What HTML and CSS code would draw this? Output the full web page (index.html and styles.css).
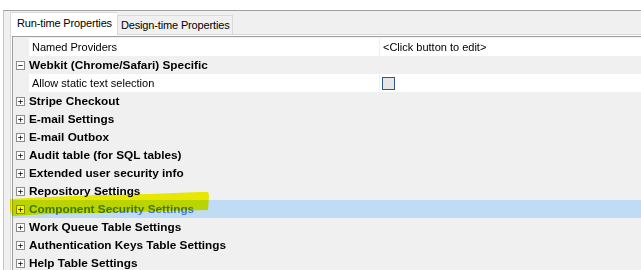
FILE: index.html
```html
<!DOCTYPE html>
<html lang="en">
<head>
  <meta charset="UTF-8">
  <meta name="viewport" content="width=device-width, initial-scale=1.0">
  <link rel="stylesheet" href="styles.css">
  <title>Properties</title>
</head>
<body>

<div id="window">
  <div class="tabs">
    <div class="tab active">Run-time Properties</div>
    <div class="tab">Design-time Properties</div>
  </div>

  <div class="panel">
    <div class="grid">
      <div class="row prop">
        <span class="gutter"></span>
        <span class="name">Named Providers</span>
        <span class="value">&lt;Click button to edit&gt;</span>
      </div>
      <div class="row cat">
        <span class="toggle">&minus;</span>
        <span class="label">Webkit (Chrome/Safari) Specific</span>
      </div>
      <div class="row prop">
        <span class="gutter"></span>
        <span class="name">Allow static text selection</span>
        <span class="value"><span class="check"></span></span>
      </div>
      <div class="row cat"><span class="toggle">+</span><span class="label">Stripe Checkout</span></div>
      <div class="row cat"><span class="toggle">+</span><span class="label">E-mail Settings</span></div>
      <div class="row cat"><span class="toggle">+</span><span class="label">E-mail Outbox</span></div>
      <div class="row cat"><span class="toggle">+</span><span class="label">Audit table (for SQL tables)</span></div>
      <div class="row cat"><span class="toggle">+</span><span class="label">Extended user security info</span></div>
      <div class="row cat"><span class="toggle">+</span><span class="label">Repository Settings</span></div>
      <div class="row cat selected"><span class="toggle">+</span><span class="label">Component Security Settings</span></div>
      <div class="row cat"><span class="toggle">+</span><span class="label">Work Queue Table Settings</span></div>
      <div class="row cat"><span class="toggle">+</span><span class="label">Authentication Keys Table Settings</span></div>
      <div class="row cat"><span class="toggle">+</span><span class="label">Help Table Settings</span></div>
    </div>
  </div>
</div>

<!-- yellow marker stroke drawn over the grid -->
<svg class="marker" width="210" height="32" viewBox="0 0 210 32">
  <polygon points="2,11 40,9 90,7 140,6 192,4 200,4 201,7 200,22 150,23 90,25 40,26 4,28 2,22" />
</svg>

</body>
</html>
```

FILE: styles.css
```css
body {
  margin: 0;
  background-color: #fff;
  font-family: 'Liberation Sans', Arial, sans-serif;
  font-size: 11px;
  color: #000;
  height: 270px;
  overflow: hidden;
  position: relative;
}

#window {
  margin: 10px 0 0 3px;
  border-top: 1px solid #a0a0a0;
  border-left: 1px solid #c4c4c4;
  background-color: #f0f0f0;
  padding: 2px 0 0 6px;
  height: 257px;
  overflow: hidden;
}

.tabs {
  display: flex;
  align-items: flex-end;
  height: 21px;
  position: relative;
  z-index: 1;
}

.tab {
  height: 18px;
  line-height: 18px;
  padding: 0 2px 0 3px;
  border: 1px solid #d9d9d9;
  border-bottom: none;
  background-color: #f0f0f0;
  white-space: nowrap;
  letter-spacing: -0.15px;
}

.tab.active {
  height: 22px;
  line-height: 20px;
  padding: 0 5px 0 6px;
  margin-bottom: -1px;
  background-color: #fff;
  border-right: none;
}

.panel {
  border: 1px solid #d9d9d9;
  border-right: none;
  padding: 1px 0 0 1px;
  background-color: #fff;
}

.grid {
  border-top: 1px solid #a0a0a0;
  border-left: 1px solid #a0a0a0;
  padding-top: 1px;
  background-color: #f0f0f0;
}

.row {
  display: flex;
  height: 18px;
  line-height: 18px;
  white-space: nowrap;
}

.prop .gutter {
  width: 16px;
  flex: none;
  background-color: #f0f0f0;
}

.prop .name {
  width: 347px;
  flex: none;
  padding-left: 3px;
  background-color: #fff;
  border-right: 1px solid #f0f0f0;
}

.prop .value {
  flex: 1;
  padding-left: 3px;
  background-color: #fff;
  display: flex;
  align-items: center;
}

.check {
  width: 11px;
  height: 11px;
  margin-left: -1px;
  border: 1px solid #2b5a8c;
  background-color: #e6e6e6;
}

.cat {
  background-color: #f0f0f0;
  align-items: center;
  font-weight: bold;
  font-size: 11.8px;
}

.toggle {
  width: 7px;
  height: 7px;
  margin: 0 4px 0 3px;
  border: 1px solid #8c8c8c;
  background-color: #fff;
  font-family: 'DejaVu Sans Mono', monospace;
  font-size: 9px;
  font-weight: normal;
  line-height: 7px;
  text-align: center;
  color: #000;
  overflow: hidden;
}

.cat.selected {
  background-color: #c0dcf5;
  color: #4479e0;
}

.marker {
  position: absolute;
  left: 8px;
  top: 188px;
  mix-blend-mode: multiply;
}

.marker polygon {
  fill: #f6f600;
}
```
